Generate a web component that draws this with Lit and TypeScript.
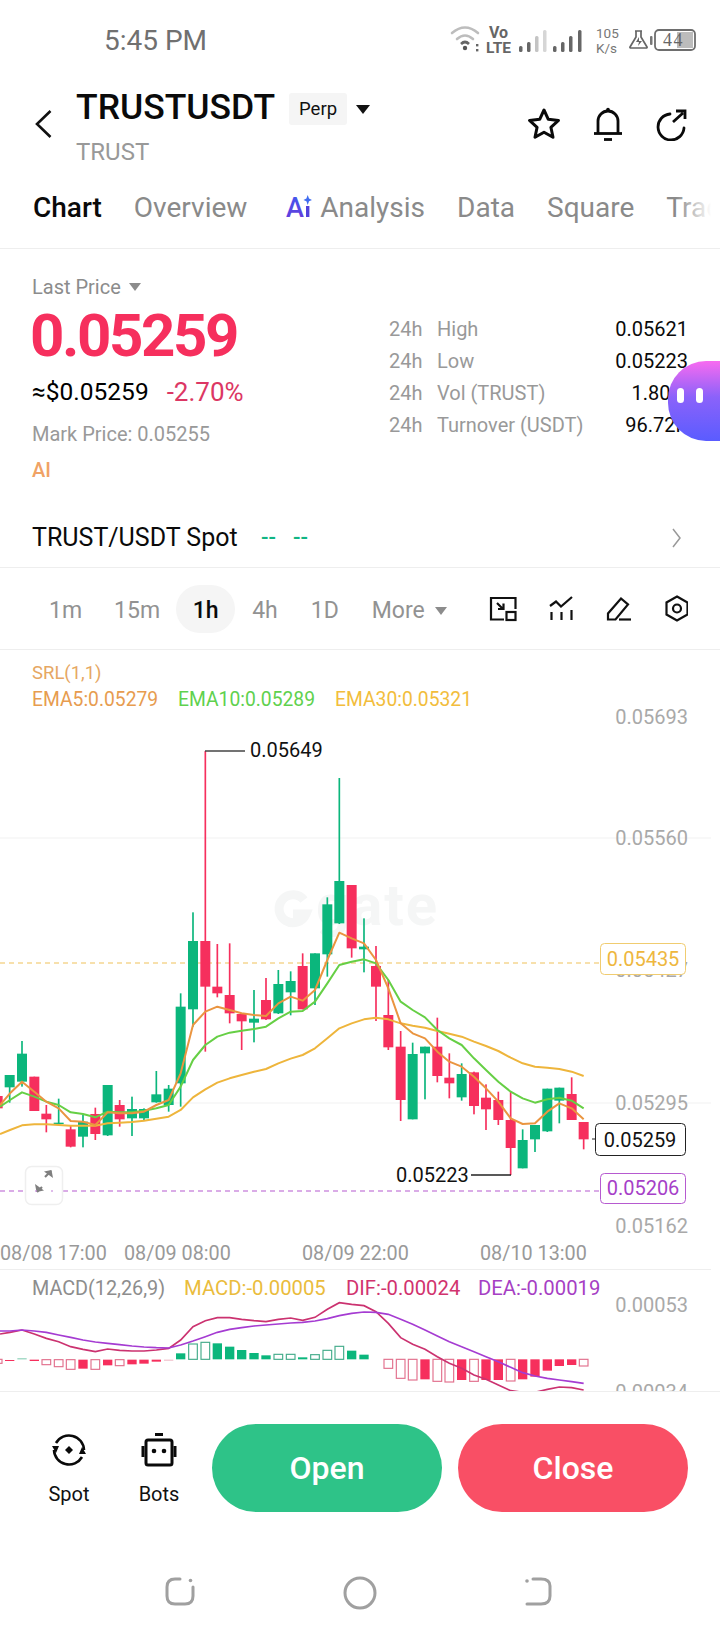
import { LitElement, html, css, svg } from "lit";
import { customElement } from "lit/decorators.js";

const G = "#0bb67c";
const R = "#f62f5d";

// x, wickTop, bodyTop, bodyBottom, wickBottom, colour; measured in 3x chart units
const candles: [number, number, number, number, number, string][] = [
  [-7, 700, 708, 745, 750, "r"], [29, 645, 645, 682, 728, "g"], [66, 543, 581, 665, 680, "g"], [103, 650, 650, 753, 753, "r"],
  [139, 735, 761, 778, 817, "r"], [176, 716, 788, 792, 792, "g"], [212, 795, 808, 860, 862, "r"], [249, 765, 785, 830, 862, "g"],
  [286, 743, 762, 822, 840, "r"], [323, 675, 675, 826, 828, "g"], [359, 720, 735, 778, 800, "r"], [396, 710, 747, 775, 828, "g"],
  [432, 745, 747, 775, 780, "g"], [469, 633, 703, 727, 728, "g"], [506, 675, 686, 735, 755, "g"], [542, 400, 440, 670, 740, "g"],
  [579, 157, 243, 448, 500, "g"], [616, -327, 243, 380, 575, "r"], [652, 252, 380, 400, 412, "r"], [689, 250, 405, 460, 490, "r"],
  [725, 460, 462, 484, 570, "r"], [762, 390, 476, 488, 547, "g"], [798, 354, 420, 478, 480, "r"], [835, 330, 372, 460, 462, "g"],
  [872, 334, 363, 397, 466, "g"], [908, 280, 318, 448, 448, "r"], [945, 280, 280, 385, 435, "g"], [982, 112, 133, 283, 350, "g"],
  [1018, -246, 63, 190, 192, "g"], [1055, 75, 75, 265, 293, "r"], [1092, 175, 260, 268, 337, "g"], [1128, 258, 318, 380, 483, "r"],
  [1165, 360, 465, 562, 570, "r"], [1202, 513, 560, 720, 783, "r"], [1238, 548, 582, 778, 778, "g"], [1275, 560, 560, 580, 718, "g"],
  [1312, 473, 560, 648, 667, "r"], [1348, 580, 653, 670, 715, "r"], [1385, 610, 642, 712, 722, "g"], [1422, 635, 637, 738, 763, "r"],
  [1458, 673, 713, 748, 810, "r"], [1495, 695, 720, 780, 795, "r"], [1532, 695, 780, 864, 945, "r"], [1568, 808, 840, 925, 925, "g"],
  [1605, 795, 795, 838, 876, "g"], [1642, 686, 686, 814, 816, "g"], [1678, 683, 683, 722, 790, "g"], [1715, 652, 702, 780, 780, "r"],
  [1751, 786, 786, 838, 868, "r"],
];

const xs = [0, 30, 66, 103, 139, 176, 212, 249, 286, 323, 359, 396, 432, 469, 506, 542, 579, 616, 652, 689, 725, 762, 798, 835, 872, 908, 945, 982, 1018, 1055, 1092, 1128, 1165, 1202, 1238, 1275, 1312, 1348, 1385, 1422, 1458, 1495, 1532, 1568, 1605, 1642, 1678, 1715, 1751];

const ema5 = [735, 700, 665, 695, 725, 745, 783, 785, 795, 757, 760, 760, 755, 735, 720, 640, 495, 455, 440, 450, 460, 465, 468, 430, 410, 422, 390, 300, 218, 235, 250, 300, 385, 490, 520, 535, 575, 605, 620, 650, 685, 725, 775, 792, 790, 755, 730, 745, 778];
const ema10 = [740, 720, 697, 710, 725, 735, 757, 762, 772, 755, 757, 757, 752, 745, 735, 680, 600, 555, 530, 518, 512, 507, 500, 475, 455, 453, 425, 370, 315, 305, 298, 310, 360, 425, 450, 472, 510, 535, 555, 595, 630, 665, 695, 715, 728, 718, 713, 722, 745];
const ema30 = [822, 810, 796, 793, 793, 795, 797, 797, 797, 790, 788, 786, 782, 776, 770, 750, 712, 688, 668, 655, 645, 635, 627, 610, 596, 585, 565, 535, 505, 490, 478, 473, 478, 490, 497, 503, 513, 521, 530, 545, 558, 573, 593, 610, 620, 623, 627, 635, 648];
const dif = [222, 217, 210, 222, 235, 245, 260, 268, 275, 267, 271, 273, 273, 270, 265, 240, 200, 182, 173, 173, 178, 182, 185, 178, 174, 181, 172, 148, 128, 133, 137, 155, 190, 233, 253, 268, 290, 310, 325, 345, 358, 375, 392, 397, 397, 388, 381, 383, 390];
const dea = [213, 213, 210, 213, 217, 225, 232, 240, 246, 250, 254, 258, 261, 263, 264, 255, 243, 230, 217, 208, 203, 198, 195, 192, 189, 187, 183, 176, 167, 160, 156, 157, 163, 178, 193, 210, 228, 245, 260, 275, 290, 305, 322, 338, 348, 355, 360, 365, 370];

// x, top, bottom, style: f filled, h hollow; colour
const hist: [number, number, number, string, string][] = [
  [-7, 298, 310, "h", "r"], [29, 300, 303, "f", "r"], [66, 295, 298, "f", "lg"], [103, 299, 303, "f", "r"], [139, 299, 314, "h", "r"],
  [176, 299, 320, "h", "r"], [212, 299, 328, "h", "r"], [249, 299, 326, "f", "r"], [286, 299, 328, "h", "r"], [323, 299, 316, "f", "r"],
  [359, 299, 317, "h", "r"], [396, 299, 313, "f", "r"], [432, 299, 311, "f", "r"], [469, 299, 305, "f", "r"], [506, 299, 302, "f", "lr"],
  [542, 280, 298, "f", "g"], [579, 252, 298, "h", "g"], [616, 247, 298, "h", "g"], [652, 250, 298, "f", "g"], [689, 260, 298, "f", "g"],
  [725, 270, 298, "f", "g"], [762, 279, 298, "f", "g"], [798, 286, 298, "f", "g"], [835, 283, 298, "h", "g"], [872, 283, 298, "h", "g"],
  [908, 292, 298, "f", "g"], [945, 284, 298, "h", "g"], [982, 271, 298, "h", "g"], [1018, 259, 298, "h", "g"], [1055, 272, 298, "f", "g"],
  [1092, 284, 298, "f", "g"], [1165, 298, 325, "h", "r"], [1202, 298, 355, "h", "r"], [1238, 298, 360, "h", "r"], [1275, 298, 358, "f", "r"],
  [1312, 298, 364, "h", "r"], [1348, 298, 366, "h", "r"], [1385, 298, 360, "f", "r"], [1422, 298, 364, "h", "r"], [1458, 298, 360, "f", "r"],
  [1495, 298, 360, "f", "r"], [1532, 298, 363, "h", "r"], [1568, 298, 358, "f", "r"], [1605, 298, 350, "f", "r"], [1642, 298, 332, "f", "r"],
  [1678, 298, 318, "f", "r"], [1715, 298, 315, "f", "r"], [1751, 298, 318, "h", "r"],
];

const pts = (a: number[]) => a.map((v, i) => `${xs[i]},${v}`).join(" ");

const stats = [
  ["High", "0.05621"],
  ["Low", "0.05223"],
  ["Vol (TRUST)", "1.80M"],
  ["Turnover (USDT)", "96.72K"],
];

@customElement("app-root")
export class AppRoot extends LitElement {
  static styles = css`
    :host { display: block; width: 720px; height: 1640px; background: #fff; overflow: hidden; font-family: Roboto, "Liberation Sans", sans-serif; color: #000; }
    svg { display: block; flex: none; }
    .status { height: 82px; display: flex; align-items: center; padding-left: 104px; position: relative; }
    .time { font-size: 28px; color: #707070; line-height: 82px; width: 346px; }
    .head { height: 90px; display: flex; align-items: flex-start; padding-left: 35px; }
    .back { margin-top: 28px; }
    .tt { margin-left: 24px; width: 451px; }
    .trow { display: flex; align-items: center; height: 40px; margin-top: 5px; }
    .title { font-size: 35.5px; font-weight: 500; line-height: 40px; color: #0a0a0a; }
    .perp { margin: 4px 0 0 14px; height: 32px; width: 58px; background: #f5f5f5; border-radius: 3px; font-size: 18.5px; line-height: 32px; text-align: center; color: #111; }
    .tri { margin: 4px 0 0 9px; width: 0; height: 0; border-left: 7px solid transparent; border-right: 7px solid transparent; border-top: 9px solid #111; }
    .sub { font-size: 24px; color: #999; line-height: 28px; margin-top: 11px; }
    .hicons { display: flex; margin-top: 25px; gap: 32px; }
    .tabs { height: 70px; display: flex; padding-left: 33px; gap: 32px; position: relative; overflow: hidden; font-size: 28px; color: #8a8a8a; }
    .tab { padding-top: 21px; line-height: 30px; white-space: nowrap; }
    .tab.on { color: #0a0a0a; font-weight: 500; }
    .bar { width: 32px; height: 6px; border-radius: 3px; background: #0a0a0a; margin: 19px 0 0 17px; }
    .tab.ai { display: flex; margin-left: 7px; gap: 8px; align-items: flex-start; }
    .tab.ai svg { margin-top: 0; }
    .fade { position: absolute; right: 0; top: 0; bottom: 0; width: 44px; background: linear-gradient(90deg, rgba(255,255,255,0), #fff 80%); }
    .rule { height: 7px; border-bottom: 1px solid #eee; box-sizing: border-box; }
    .pricebox { height: 259px; display: flex; padding-left: 32px; position: relative; }
    .left { width: 357px; }
    .lp { display: flex; align-items: center; gap: 8px; margin-top: 24px; height: 28px; font-size: 20px; color: #8c8c8c; }
    .tdown { width: 0; height: 0; border-left: 6px solid transparent; border-right: 6px solid transparent; border-top: 8px solid #8c8c8c; }
    .big { font-size: 60px; font-weight: 700; color: #f62f5d; line-height: 66px; margin: 2px 0 0 -2px; letter-spacing: -2.4px; }
    .usd { display: flex; gap: 18px; font-size: 24.5px; line-height: 32px; margin-top: 7px; }
    .usd b { font-weight: 400; font-size: 26px; color: #dc3764; }
    .mark { font-size: 20px; color: #999; line-height: 28px; margin-top: 12px; }
    .ailab { font-size: 20px; font-weight: 500; color: #f0a265; line-height: 28px; margin-top: 8px; }
    .right { padding-top: 64px; width: 299px; }
    .st { display: flex; height: 32px; line-height: 32px; font-size: 20px; color: #999; }
    .st i { font-style: normal; width: 48px; }
    .st span { flex: 1; }
    .st b { font-weight: 400; color: #0a0a0a; }
    .bubble { position: absolute; left: 668px; top: 112px; width: 90px; height: 80px; border-radius: 38px; background: linear-gradient(180deg, #f86bf0 0%, #8b62fa 45%, #5a5cff 100%); display: flex; gap: 12px; padding: 27px 0 0 9px; box-sizing: border-box; }
    .bubble u { display: block; width: 7px; height: 15px; border-radius: 4px; background: #fff; }
    .spotrow { height: 60px; display: flex; align-items: center; padding: 0 39px 0 32px; border-bottom: 1px solid #eee; box-sizing: border-box; }
    .spotrow .nm { font-size: 25px; color: #0a0a0a; width: 229px; font-weight: 400; }
    .dd { color: #10b584; font-size: 22px; font-weight: 500; width: 32px; }
    .chev { margin-left: auto; }
    .iv { height: 82px; display: flex; align-items: center; padding-left: 49px; gap: 33px; font-size: 23px; color: #929292; border-bottom: 1px solid #eee; box-sizing: border-box; }
    .iv > span { padding-top: 4px; }
    .iv .m15 { margin-left: -1px; }
    .iv > .act { padding-top: 0; width: 59px; height: 48px; line-height: 52px; border-radius: 24px; background: #f5f5f5; color: #0a0a0a; font-weight: 500; text-align: center; margin: 0 -16px 0 -17px; }
    .more { display: flex; align-items: center; gap: 10px; }
    .ivicons { margin-left: auto; margin-right: 32px; }
    .chart { height: 742px; border-bottom: 1px solid #eee; box-sizing: border-box; }
    .bottom { height: 148px; display: flex; padding: 32px 0 0 39px; box-sizing: border-box; }
    .act2 { width: 60px; display: flex; flex-direction: column; align-items: center; font-size: 20px; color: #111; margin-right: 30px; padding-top: 9px; box-sizing: border-box; }
    .act2 span { line-height: 24px; margin-top: 15px; }
    .btn { width: 230px; height: 88px; border-radius: 44px; color: #fff; font-size: 32px; font-weight: 500; line-height: 88px; text-align: center; }
    .open { background: #2ec388; margin-left: -7px; }
    .close { background: #f94f65; margin-left: 16px; }
    .nav { height: 100px; display: flex; align-items: flex-start; padding: 36px 0 0 165px; gap: 148px; box-sizing: border-box; }
  `;

  private statusIcons() {
    return html`<svg width="270" height="82" viewBox="450 0 270 82">
      <g fill="none" stroke="#bdbdbd" stroke-width="2.6" stroke-linecap="round">
        <path d="M452 33q13-11 26 0"/><path d="M457 39q8-7 16 0" /></g>
      <path d="M461 44q4-4 8 0" fill="none" stroke="#666" stroke-width="2.6"/>
      <circle cx="465" cy="48" r="2.2" fill="#555"/>
      <rect x="476" y="44" width="2.4" height="2.4" fill="#666"/><rect x="476" y="49" width="2.4" height="2.4" fill="#666"/>
      <text x="489" y="38" font-size="16" font-weight="700" fill="#666" font-family="Roboto">Vo</text>
      <text x="486" y="53" font-size="15.5" font-weight="700" fill="#666" font-family="Roboto">LTE</text>
      <g fill="#666">
        <rect x="519" y="46" width="3.5" height="6" rx="1.5"/><rect x="527" y="42" width="3.5" height="10" rx="1.5"/>
        <rect x="535" y="36" width="3.5" height="16" rx="1.5" fill="#c4c4c4"/><rect x="543" y="30" width="3.5" height="22" rx="1.5" fill="#d6d6d6"/>
        <rect x="553" y="46" width="3.5" height="6" rx="1.5"/><rect x="561" y="42" width="3.5" height="10" rx="1.5"/>
        <rect x="569" y="36" width="3.5" height="16" rx="1.5"/><rect x="578" y="30" width="3.5" height="22" rx="1.5"/>
      </g>
      <text x="596" y="38" font-size="13.5" fill="#777" font-family="Roboto">105</text>
      <text x="596" y="53" font-size="13.5" fill="#777" font-family="Roboto">K/s</text>
      <path d="M635 31h7M636 31v6l-6 10q-.5 1 1 1h15q1.500 0 1-1l-6-10v-6" fill="none" stroke="#666" stroke-width="1.700" stroke-linejoin="round"/>
      <path d="M639 37l-3 5h3l-1 4 4-5h-3z" fill="#666"/>
      <rect x="650" y="36" width="2.500" height="9" rx="1" fill="#777"/>
      <rect x="677" y="32" width="16" height="16" fill="#bcbcbc"/>
      <rect x="655" y="30" width="40" height="20" rx="4" fill="none" stroke="#6e6e6e" stroke-width="1.800"/>
      <text x="663" y="46" font-size="18" fill="#666" font-family="Liberation Serif" letter-spacing="1.500">44</text>
    </svg>`;
  }

  private chart() {
    const T = (x: number, y: number, s: string, c: string, size = 20, anchor = "start") =>
      svg`<text x=${x} y=${y} fill=${c} font-size=${size} text-anchor=${anchor} font-family="Roboto">${s}</text>`;
    const A = "#a9a9a9";
    return html`<svg width="720" height="741" viewBox="0 650 720 741">
      <line x1="0" y1="838" x2="711" y2="838" stroke="#f1f1f1"/>
      <line x1="0" y1="1103" x2="711" y2="1103" stroke="#f1f1f1"/>
      <path d="M304 900A14 14 0 1 0 306 914H293" fill="none" stroke="#f5f6f6" stroke-width="9"/>
      <text x="316" y="925" font-size="58" font-weight="700" fill="#f5f6f6" letter-spacing="2" font-family="Roboto">gate</text>

      ${T(32, 679, "SRL(1,1)", "#e6a763", 18.5)}
      ${T(32, 706, "EMA5:0.05279", "#e79c4f", 19.3)}
      ${T(178, 706, "EMA10:0.05289", "#5fd14e", 19.3)}
      ${T(335, 706, "EMA30:0.05321", "#f2bd3c", 19.3)}
      ${T(688, 724, "0.05693", A, 20, "end")}
      ${T(688, 845, "0.05560", A, 20, "end")}
      ${T(688, 977, "0.05427", A, 20, "end")}
      ${T(688, 1110, "0.05295", A, 20, "end")}
      ${T(688, 1233, "0.05162", A, 20, "end")}

      <line x1="0" y1="963" x2="600" y2="963" stroke="#f0c25a" stroke-width="1.200" stroke-dasharray="5 4"/>
      <line x1="0" y1="1191" x2="600" y2="1191" stroke="#b65ad0" stroke-width="1.200" stroke-dasharray="5 4"/>

      <g transform="translate(0,860) scale(0.33333)">
        ${candles.map(([x, wt, bt, bb, wb, c]) => {
          const col = c === "g" ? G : R;
          return svg`<rect x=${x - 2.5} y=${wt} width="5" height=${wb - wt} fill=${col}/><rect x=${x - 15} y=${bt} width="30" height=${bb - bt} fill=${col}/>`;
        })}
        <polyline points=${pts(ema30)} fill="none" stroke="#eeb53c" stroke-width="6" stroke-linejoin="round"/>
        <polyline points=${pts(ema10)} fill="none" stroke="#66cf45" stroke-width="6" stroke-linejoin="round"/>
        <polyline points=${pts(ema5)} fill="none" stroke="#ea9540" stroke-width="6" stroke-linejoin="round"/>
      </g>

      <path d="M205 751H245" stroke="#444" stroke-width="1.300" fill="none"/>
      ${T(250, 757, "0.05649", "#111", 20)}
      <path d="M471 1175H511" stroke="#222" stroke-width="1.300" fill="none"/>
      ${T(396, 1182, "0.05223", "#111", 20)}

      <rect x="600.500" y="943.500" width="85" height="31" rx="4" fill="#fff" stroke="#f0cc70"/>
      ${T(643, 966, "0.05435", "#eeb73e", 20, "middle")}
      <rect x="600.500" y="1173.500" width="85" height="30" rx="4" fill="#fff" stroke="#b65ad0"/>
      ${T(643, 1195, "0.05206", "#a63fc8", 20, "middle")}
      <line x1="592" y1="1139" x2="595" y2="1139" stroke="#222"/>
      <rect x="595.500" y="1123.500" width="90" height="32" rx="4" fill="#fff" stroke="#222"/>
      ${T(640, 1147, "0.05259", "#111", 20, "middle")}

      <rect x="25.500" y="1166.500" width="37" height="38" rx="6" fill="#fff" stroke="#efefef" stroke-width="1.500"/>
      <path d="M45 1177l6-6" fill="none" stroke="#7f7f7f" stroke-width="2.200"/>
      <path d="M53 1178l-1.500-8-7.500 1.500z" fill="#7f7f7f"/>
      <path d="M42 1187l-5 5" fill="none" stroke="#7f7f7f" stroke-width="2.200"/>
      <path d="M35 1184l1.500 8 7.500 -1.500z" fill="#7f7f7f"/>
      <path d="M35 1191h2M51 1191h2" stroke="#c078d8" stroke-width="1.200"/>

      ${T(0, 1260, "08/08 17:00", "#999", 19.8)}
      ${T(124, 1260, "08/09 08:00", "#999", 19.8)}
      ${T(302, 1260, "08/09 22:00", "#999", 19.8)}
      ${T(480, 1260, "08/10 13:00", "#999", 19.8)}
      <line x1="0" y1="1269.500" x2="711" y2="1269.500" stroke="#eee"/>

      ${T(32, 1295, "MACD(12,26,9)", "#8d8d8d", 19.8)}
      ${T(184, 1295, "MACD:-0.00005", "#eabc3c", 20.3)}
      ${T(346, 1295, "DIF:-0.00024", "#d1336e", 20.3)}
      ${T(478, 1295, "DEA:-0.00019", "#a63fc4", 20.3)}
      ${T(688, 1312, "0.00053", A, 20, "end")}
      ${T(688, 1399, "0.00034", A, 20, "end")}

      <g transform="translate(0,1260) scale(0.33333)">
        ${hist.map(([x, t, b, st, c]) => {
          const col = c === "g" ? G : c === "r" ? R : c === "lg" ? "#7cc9ae" : "#efb4c2";
          const hol = c === "g" ? "#46ad8c" : "#e2718e";
          return st === "f"
            ? svg`<rect x=${x - 14} y=${t} width="28" height=${b - t} fill=${col}/>`
            : svg`<rect x=${x - 13} y=${t} width="26" height=${b - t} fill="#fff" stroke=${hol} stroke-width="3.500"/>`;
        })}
        <polyline points=${pts(dif)} fill="none" stroke="#cb3270" stroke-width="5"/>
        <polyline points=${pts(dea)} fill="none" stroke="#a53cd2" stroke-width="5"/>
      </g>
    </svg>`;
  }

  render() {
    return html`
      <div class="status"><div class="time">5:45 PM</div>${this.statusIcons()}</div>
      <div class="head">
        <svg class="back" width="17" height="28" viewBox="0 0 17 28"><path d="M15.500 1L2 14l13.500 13" fill="none" stroke="#111" stroke-width="2.600"/></svg>
        <div class="tt">
          <div class="trow"><div class="title">TRUSTUSDT</div><div class="perp">Perp</div><div class="tri"></div></div>
          <div class="sub">TRUST</div>
        </div>
        <div class="hicons">
          <svg width="34" height="34" viewBox="0 0 34 34"><path d="M17 3l4.300 9.300 10.200 1.100-7.600 6.900 2.100 10-9-5.100-9 5.100 2.100-10-7.600-6.900 10.200-1.100z" fill="none" stroke="#0a0a0a" stroke-width="3" stroke-linejoin="round"/></svg>
          <svg width="30" height="34" viewBox="0 0 30 34"><path d="M5 26V14a10 10 0 0 1 20 0v12" fill="none" stroke="#0a0a0a" stroke-width="2.800"/><path d="M1 26.500h28" stroke="#0a0a0a" stroke-width="2.800"/><path d="M11 32.500h8" stroke="#0a0a0a" stroke-width="2.800"/><circle cx="15" cy="2.500" r="1.800" fill="#0a0a0a"/></svg>
          <svg width="32" height="34" viewBox="0 0 32 34"><path d="M29 21a13 13 0 1 1-14-14" fill="none" stroke="#0a0a0a" stroke-width="2.800" stroke-linecap="round"/><path d="M18 15L28 6M21 4h9v8" fill="none" stroke="#0a0a0a" stroke-width="2.800"/></svg>
        </div>
      </div>
      <div class="tabs">
        <div class="tab on">Chart<div class="bar"></div></div>
        <div class="tab">Overview</div>
        <div class="tab ai">
          <svg width="26" height="26" viewBox="0 0 26 26"><defs><linearGradient id="aig" x1="0" y1="0" x2="0" y2="1"><stop offset="0" stop-color="#3f5cf0"/><stop offset="1" stop-color="#6a36d8"/></linearGradient></defs><text x="0" y="24" font-size="27" font-weight="500" fill="url(#aig)" font-family="Roboto">A</text><path d="M20 13h3.400v11H20z" fill="#5142dc"/><path d="M21.700 2l1.300 3.400L26 7l-3 1.300L21.700 12l-1.300-3.700L17.500 7l2.900-1.600z" fill="#3f6cf0"/></svg>
          <span>Analysis</span>
        </div>
        <div class="tab">Data</div>
        <div class="tab">Square</div>
        <div class="tab">Trade</div>
        <div class="fade"></div>
      </div>
      <div class="rule"></div>
      <div class="pricebox">
        <div class="left">
          <div class="lp">Last Price<div class="tdown"></div></div>
          <div class="big">0.05259</div>
          <div class="usd"><span>≈$0.05259</span><b>-2.70%</b></div>
          <div class="mark">Mark Price: 0.05255</div>
          <div class="ailab">AI</div>
        </div>
        <div class="right">
          ${stats.map(([l, v]) => html`<div class="st"><i>24h</i><span>${l}</span><b>${v}</b></div>`)}
        </div>
        <div class="bubble"><u></u><u></u></div>
      </div>
      <div class="spotrow">
        <div class="nm">TRUST/USDT Spot</div>
        <div class="dd">--</div>
        <div class="dd">--</div>
        <svg class="chev" width="9" height="20" viewBox="0 0 9 20"><path d="M1 1l7 9-7 9" fill="none" stroke="#999" stroke-width="1.500"/></svg>
      </div>
      <div class="iv">
        <span>1m</span><span class="m15">15m</span><span class="act">1h</span><span>4h</span><span>1D</span>
        <span class="more">More<div class="tdown"></div></span>
        <svg class="ivicons" width="199" height="28" viewBox="488 596 199 28">
          <g fill="none" stroke="#111" stroke-width="2.200">
            <path d="M503 620.500H490V599H514.500V610"/><rect x="505.500" y="613" width="9" height="8"/>
            <path d="M496 604l6 6M497 610h5.500v-5.500"/>
            <path d="M549 607l6-4.500 5 5 11-9.500"/><path d="M550.500 613v8M560.500 613v8M570.500 611v10"/>
            <path d="M607 620.500v-6l13-15 7 6-12.500 15z"/><path d="M618 620.500H630"/>
            <path d="M676 597.500l10.500 6v12l-10.500 6-10.500-6v-12z"/><circle cx="676" cy="609.500" r="4"/>
          </g>
        </svg>
      </div>
      <div class="chart">${this.chart()}</div>
      <div class="bottom">
        <div class="act2">
          <svg width="34" height="34" viewBox="0 0 34 34"><g fill="none" stroke="#0a0a0a" stroke-width="2.600"><path d="M32 17A15 15 0 0 0 4 10"/><path d="M2 17A15 15 0 0 0 30 24"/></g><path d="M0 13l7 0-3 7zM34 21l-7 0 3-7z" fill="#0a0a0a"/><path d="M17 13l4 4-4 4-4-4z" fill="#0a0a0a"/></svg>
          <span>Spot</span>
        </div>
        <div class="act2">
          <svg width="36" height="34" viewBox="0 0 36 34"><path d="M14 1.500h8" stroke="#0a0a0a" stroke-width="3"/><rect x="5" y="7" width="26" height="25" rx="2" fill="none" stroke="#0a0a0a" stroke-width="3"/><path d="M2 13v11M34 13v11" stroke="#0a0a0a" stroke-width="3"/><circle cx="13" cy="18" r="2.300" fill="#0a0a0a"/><circle cx="23" cy="18" r="2.300" fill="#0a0a0a"/></svg>
          <span>Bots</span>
        </div>
        <div class="btn open">Open</div>
        <div class="btn close">Close</div>
      </div>
      <div class="nav">
        <svg width="30" height="30" viewBox="0 0 30 30"><path d="M15 3H10Q2 3 2 11V20Q2 28 10 28H20Q28 28 28 20V11" fill="none" stroke="#a0a0a0" stroke-width="3" stroke-linecap="round"/><circle cx="25.500" cy="4.500" r="1.800" fill="#a0a0a0"/></svg>
        <svg width="34" height="34" viewBox="0 0 34 34"><circle cx="17" cy="17" r="15" fill="none" stroke="#a0a0a0" stroke-width="3"/></svg>
        <svg width="28" height="30" viewBox="0 0 28 30"><path d="M8 3H16Q25 3 25 10V20Q25 28 16 28H2" fill="none" stroke="#a0a0a0" stroke-width="3" stroke-linecap="round"/><circle cx="2" cy="5" r="1.800" fill="#a0a0a0"/></svg>
      </div>
    `;
  }
}
